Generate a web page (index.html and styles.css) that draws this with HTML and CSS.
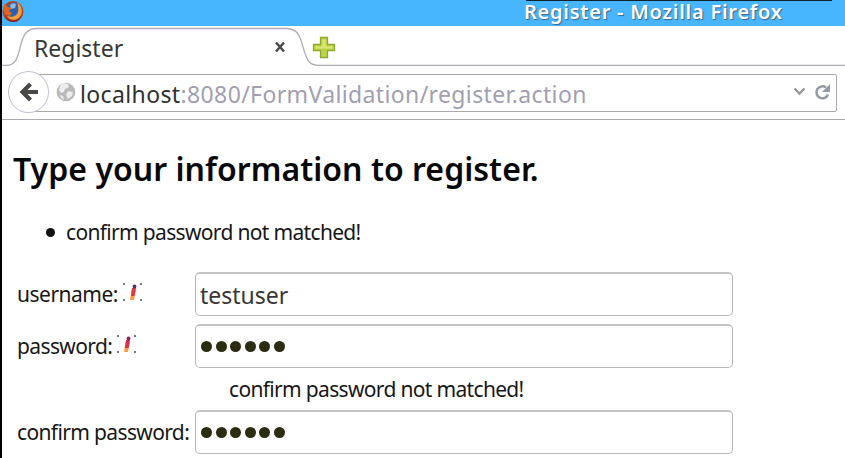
FILE: index.html
```html
<!DOCTYPE html>
<html lang="en">
<head>
<meta charset="utf-8">
<title>Register</title>
<link rel="stylesheet" href="styles.css">
</head>
<body>
<div class="window">
  <header class="titlebar">
    <svg class="firefox" width="22" height="26" viewBox="0 0 22 26">
      <circle cx="11" cy="11.5" r="10.5" fill="#b9431b"/>
      <circle cx="12" cy="10" r="7.5" fill="#2a63b5"/>
      <path d="M8 5q3-3 6-1l-1 4-4 1z" fill="#8dbbe8"/>
      <path d="M15 2c6 4 6 12 2 16-4 3-10 2-12-2 5 2 10 0 11-4 1-3 0-7-1-10z" fill="#f3a13c"/>
      <path d="M2 4l4 3 4 1-3 3 3 2-2 3-4-1C1 12 1 8 2 4z" fill="#e0641f"/>
      <path d="M3 16c4 6 12 6 16 0-1 5-5 6-8 6s-7-2-8-6z" fill="#7b2b25"/>
    </svg>
    <span class="window-title">Register - Mozilla Firefox</span>
    <span class="edge"></span>
  </header>
  <div class="tabs">
    <svg class="tab-shape" width="843" height="40" viewBox="2 26 843 40">
      <path d="M2 65.500H6C15 65 17 60 20 48C23 34 27 28.500 37 28.500H286C297 28.500 300 35 303 47C307 61 309 65.500 320 65.500H845" fill="none" stroke="#b0adb6" stroke-width="1.300"/>
    </svg>
    <span class="tab-title">Register</span>
    <svg class="close" width="12" height="12" viewBox="0 0 12 12"><path d="M2 1.500l8 9M10 1.500l-8 9" stroke="#4b4b4b" stroke-width="2.500"/></svg>
    <svg class="plus" width="24" height="24" viewBox="0 0 24 24">
      <path d="M8.500 1.500h7v7h7v6h-7v7h-7v-7h-7v-6h7z" fill="#bfd548" stroke="#8daa2e" stroke-width="1.300"/>
      <path d="M10.500 3.500h3v7h7v2h-17v-2h7z" fill="#d9e873"/>
    </svg>
  </div>
  <div class="navbar">
    <div class="back">
      <svg width="20" height="20" viewBox="0 0 20 20"><path d="M19 10H4M11.500 2L3.500 10l8 8" fill="none" stroke="#494947" stroke-width="4.200"/></svg>
    </div>
    <div class="urlbar">
      <svg class="globe" width="20" height="20" viewBox="0 0 20 20">
        <circle cx="10" cy="10" r="9.300" fill="#b9b9b9"/>
        <path d="M7 1l5 1 1 3-4 2-1 3-3 1-2-3 1-4zM12 9l5 1-1 4-4 3-2-4zM4 13l3 1 1 4-3-2z" fill="#eeeeee"/>
      </svg>
      <span class="url"><b>localhost</b>:8080/FormValidation/register.action</span>
      <svg class="actions" width="40" height="20" viewBox="0 0 40 20">
        <path d="M2.500 6.500l5 5 5-5" fill="none" stroke="#96969a" stroke-width="2.300"/>
        <path d="M34 5.500a6 6 0 1 0 2 7" fill="none" stroke="#929ba4" stroke-width="2.500"/>
        <path d="M38 2v8h-8z" fill="#929ba4"/>
      </svg>
    </div>
  </div>
  <main>
    <h1>Type your information to register.</h1>
    <ul><li>confirm password not matched!</li></ul>
    <form>
      <label for="u"><span class="user-label">username:</span><svg class="info" width="21" height="20" viewBox="0 0 21 20"><g fill="#777785"><path d="M0 0h2v2H0zM17 0h2v2h-2zM0 16h2v2H0zM17 16h2v2h-2z"/></g><path d="M8.500 7h4.500l-2 10H7z" fill="#f5a04a"/><path d="M9 5h4l-1.500 8H8z" fill="#df3a3a"/><circle cx="11.500" cy="3.500" r="1.900" fill="#563070"/></svg></label>
      <input id="u" type="text" value="testuser">
      <label for="p"><span class="pass-label">password:</span><svg class="info" width="21" height="20" viewBox="0 0 21 20"><g fill="#777785"><path d="M0 0h2v2H0zM17 0h2v2h-2zM0 16h2v2H0zM17 16h2v2h-2z"/></g><path d="M8.500 7h4.500l-2 10H7z" fill="#f5a04a"/><path d="M9 5h4l-1.500 8H8z" fill="#d92c4e"/><circle cx="11.500" cy="3.500" r="1.900" fill="#8b2070"/></svg></label>
      <div class="field dots" id="p"><i></i><i></i><i></i><i></i><i></i><i></i></div>
      <p class="error">confirm password not matched!</p>
      <label for="c"><span class="confirm-label">confirm password:</span></label>
      <div class="field dots" id="c"><i></i><i></i><i></i><i></i><i></i><i></i></div>
    </form>
  </main>
</div>
</body>
</html>
```
FILE: styles.css
```css
* { box-sizing: border-box; }
body { margin: 0; overflow: hidden; background: #fff; color: #171717; font-family: "Noto Sans", sans-serif; }
.window { width: 845px; height: 458px; border-left: 2px solid #000; overflow: hidden; }
.titlebar { position: relative; height: 26px; background: #48b5ff; display: flex; align-items: flex-start; }
.firefox { display: block; }
.window-title { margin-left: 500px; font-size: 20px; line-height: 24px; font-weight: 600; letter-spacing: .75px; color: #fff; white-space: nowrap; text-shadow: 1px 1px 1px #45647f; }
.edge { position: absolute; left: 524px; top: 0; width: 306px; height: 1px; background: #102234; }
.tabs { position: relative; height: 40px; display: flex; align-items: center; background: #fff; }
.tab-shape { position: absolute; left: 0; top: 0; }
.tab-title { width: 238px; padding-left: 32px; font-size: 23px; line-height: 40px; color: #373737; padding-top: 3px; }
.close { margin-left: 34px; margin-top: 2px; }
.plus { margin-left: 26px; margin-top: 3px; }
.navbar { height: 54px; border-bottom: 1px solid #aaa; padding: 8px 8px 0 20px; position: relative; }
.back { position: absolute; left: 6px; top: 5px; width: 41px; height: 42px; border: 1px solid #c4c0d6; border-radius: 50%; display: grid; place-items: center; background: #fff; z-index: 1; }
.urlbar { height: 38px; border: 1px solid #aaa; border-radius: 2px; display: flex; align-items: center; padding-left: 33px; padding-right: 4px; }
.globe { flex: none; margin-top: -2px; }
.url { margin-left: 4px; font-size: 23px; line-height: 36px; letter-spacing: .37px; color: #a19fb0; white-space: nowrap; padding-top: 2px; }
.url b { font-weight: 400; color: #303030; }
.actions { margin-left: auto; flex: none; margin-top: -2px; }
main { padding: 0 11px; }
h1 { margin: 27px 0 0; font-size: 32px; line-height: 44px; font-weight: 600; letter-spacing: .04px; color: #090909; white-space: nowrap; }
ul { margin: 25px 0 0; padding: 0; list-style: none; font-size: 21px; line-height: 32px; letter-spacing: -.67px; }
li { display: flex; align-items: center; white-space: nowrap; }
li::before { content: ""; width: 9px; height: 9px; border-radius: 50%; background: #111; margin: 1px 11px 0 33px; }
form { margin-top: 24px; display: grid; grid-template-columns: 178px 538px; grid-template-rows: 44px 44px 26px 44px; row-gap: 8px; padding-left: 4px; }
label { display: flex; align-items: center; font-size: 21px; white-space: nowrap; }
.user-label { letter-spacing: -.5px; }
.pass-label { letter-spacing: -.62px; }
.confirm-label { letter-spacing: -.64px; }
.info { margin-left: 5px; margin-top: -2px; }
input, .field { height: 44px; width: 538px; border: 1px solid #b8b8b8; border-top: 2px solid #c4c4c4; border-radius: 5px; background: #fff; padding: 0 0 0 4px; font: 23px "Noto Sans", sans-serif; color: #373737; }
.dots { display: flex; align-items: center; gap: 3.600px; padding: 0 0 0 5px; }
.dots i { width: 11px; height: 11px; border-radius: 50%; background: #2b2c12; }
.error { grid-column: 2; margin: 0 0 0 34px; font-size: 21px; line-height: 26px; letter-spacing: -.67px; white-space: nowrap; }
```
